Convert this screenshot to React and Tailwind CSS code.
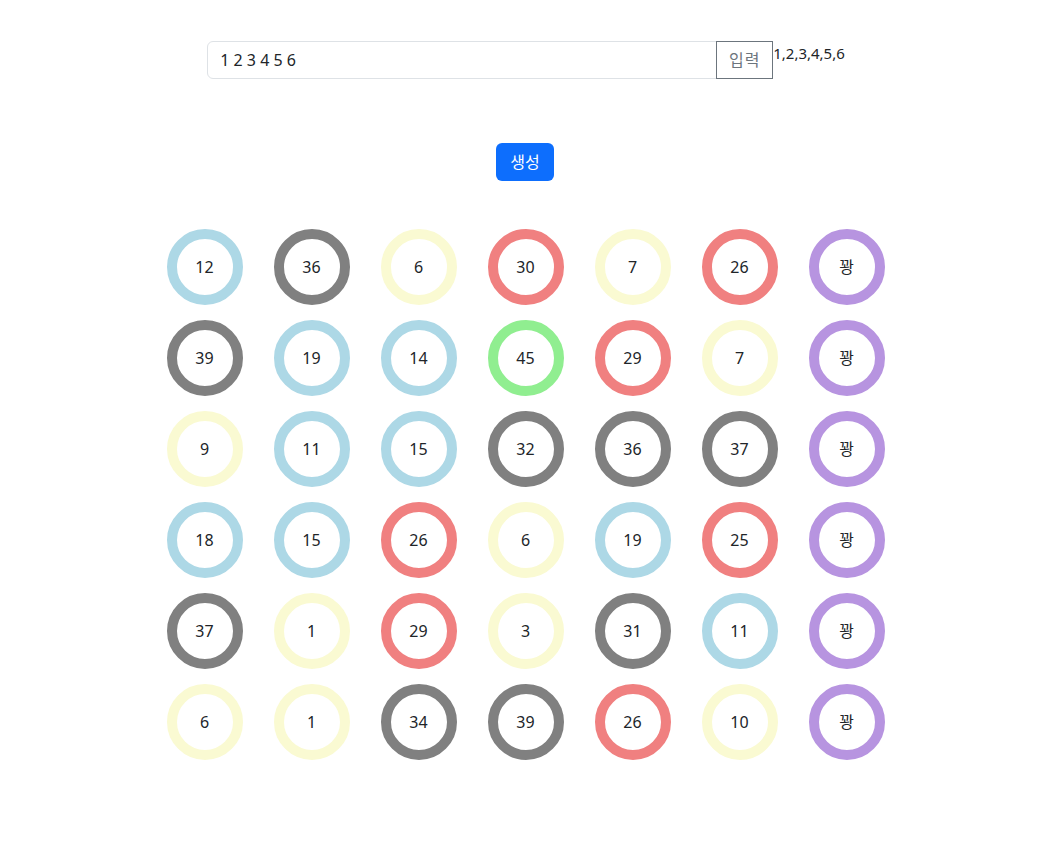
import { useState } from "react";

const COLORS = {
    blue: "border-[#add8e6]",
    gray: "border-[#808080]",
    yellow: "border-[#fafad2]",
    red: "border-[#f08080]",
    green: "border-[#90ee90]",
    purple: "border-[#b794e0]",
};

function colorOf(n) {
    if (n <= 10) return COLORS.yellow;
    if (n <= 20) return COLORS.blue;
    if (n <= 30) return COLORS.red;
    if (n <= 40) return COLORS.gray;
    return COLORS.green;
}

const ROWS = [
    [12, 36, 6, 30, 7, 26],
    [39, 19, 14, 45, 29, 7],
    [9, 11, 15, 32, 36, 37],
    [18, 15, 26, 6, 19, 25],
    [37, 1, 29, 3, 31, 11],
    [6, 1, 34, 39, 26, 10],
];

function Ball({ children, color }) {
    return (
        <div className={`w-[76px] h-[76px] rounded-full border-[10px] ${color} flex items-center justify-center text-[16px] text-[#212529]`}>
            {children}
        </div>
    );
}

export default function App() {
    const [value, setValue] = useState("1 2 3 4 5 6");

    return (
        <div
            className="min-h-[865px] bg-white pt-[41px] pl-[12px] flex flex-col items-center"
            style={{ fontFamily: "'Noto Sans', 'Noto Sans CJK KR', sans-serif" }}
        >
            {/* input row */}
            <div className="flex items-start ml-[2px]">
                <div className="flex w-[566px] h-[38px]">
                    <input
                        className="flex-1 min-w-0 border border-[#dee2e6] rounded-l-[6px] px-[12px] text-[16px] text-[#212529] outline-none"
                        value={value}
                        onChange={e => setValue(e.target.value)}
                    />
                    <button className="w-[57px] border border-[#6c757d] text-[16px] tracking-[1px] text-[#6c757d] -ml-px">
                        입력
                    </button>
                </div>
                <span className="text-[15px] text-[#212529] leading-[24px]">1,2,3,4,5,6</span>
            </div>

            <button className="mt-[64px] h-[38px] w-[58px] rounded-[6px] bg-[#0d6efd] text-white text-[16px]">
                생성
            </button>

            {/* balls */}
            <div className="mt-[48px] ml-[1px] grid grid-cols-7 gap-x-[31px] gap-y-[15px]">
                {ROWS.map((row, i) => (
                    <>
                        {row.map((n, j) => (
                            <Ball key={`${i}-${j}`} color={colorOf(n)}>{n}</Ball>
                        ))}
                        <Ball key={`${i}-b`} color={COLORS.purple}>꽝</Ball>
                    </>
                ))}
            </div>
        </div>
    );
}
